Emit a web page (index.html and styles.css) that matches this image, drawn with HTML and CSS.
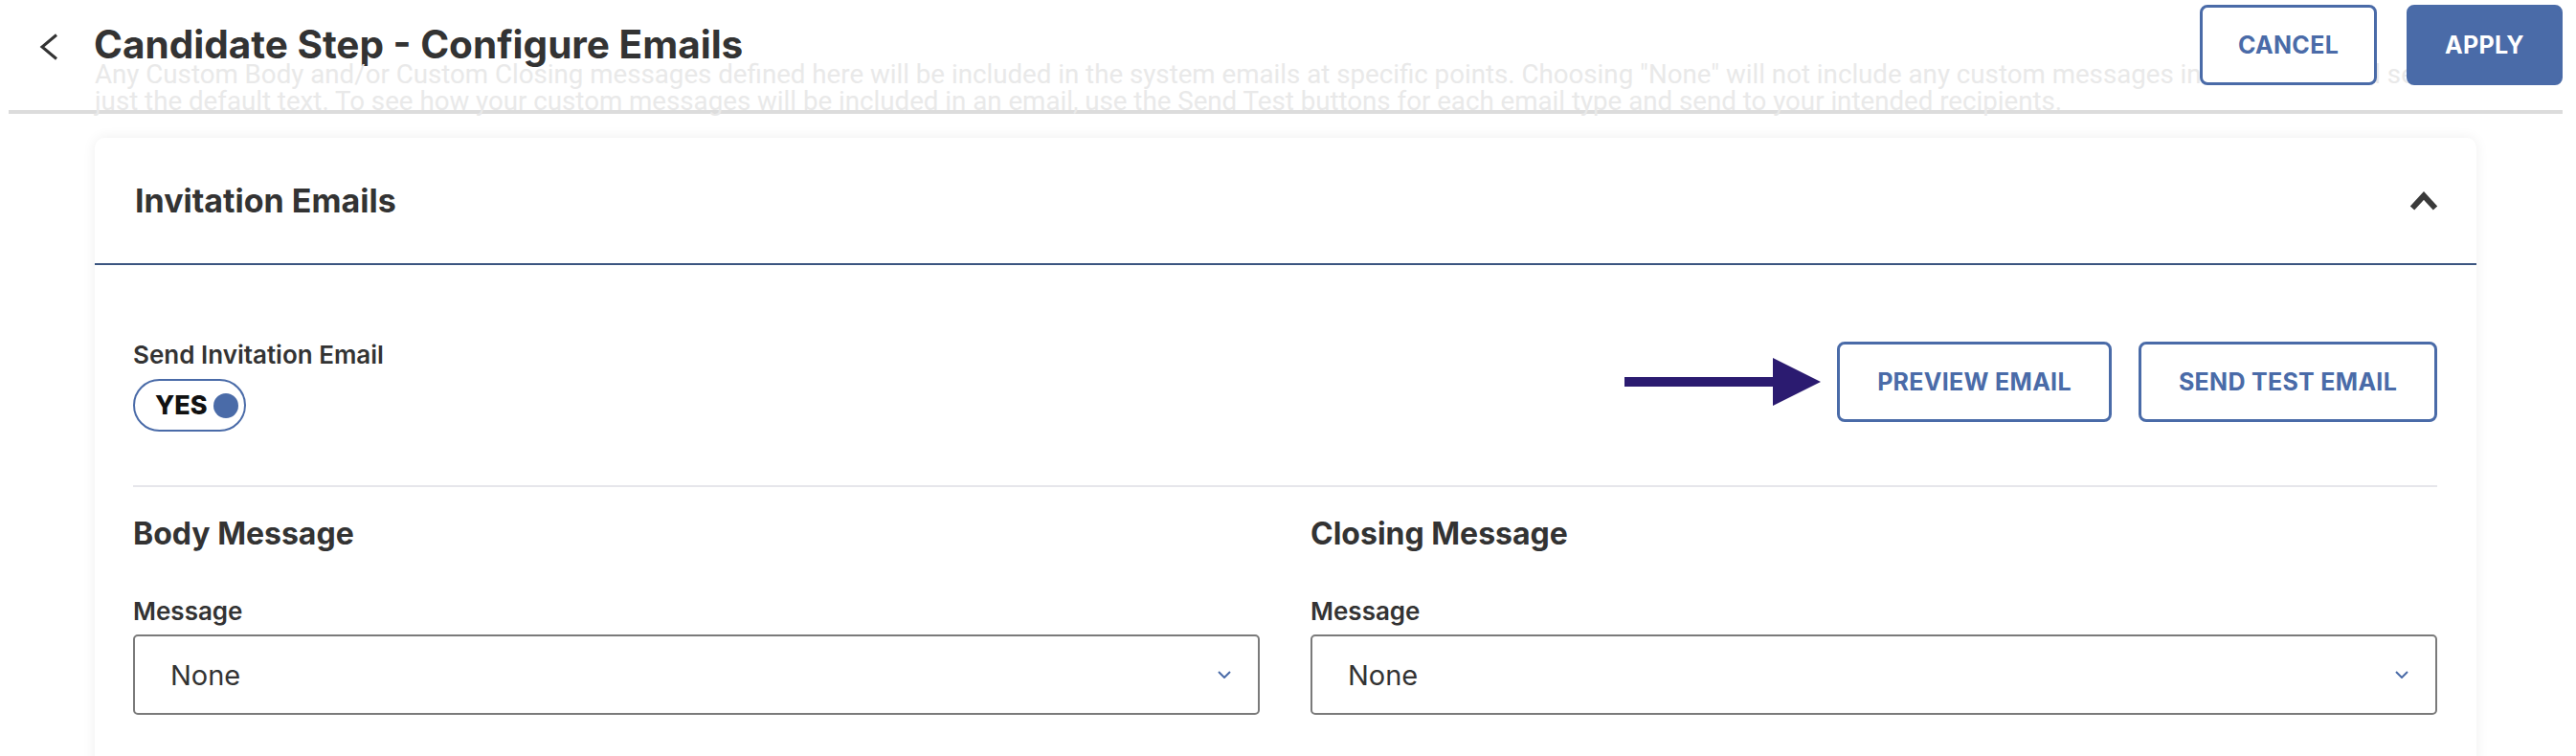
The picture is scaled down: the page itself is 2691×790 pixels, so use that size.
FILE: index.html
```html
<!DOCTYPE html>
<html lang="en">
<head>
    <meta charset="UTF-8">
    <meta name="viewport" content="width=device-width, initial-scale=1.0">
    <title>Candidate Step - Configure Emails</title>
    <link rel="stylesheet" href="styles.css">
</head>
<body>
    <header class="page-header">
        <div class="header-main">
            <svg class="back-icon" width="22" height="28" viewBox="0 0 22 28">
                <polyline points="19,1.5 4,14 19,26.5" fill="none" stroke="#333" stroke-width="3"/>
            </svg>
            <div class="header-text">
                <h1>Candidate Step - Configure Emails</h1>
                <p class="intro">Any Custom Body and/or Custom Closing messages defined here will be included in the system emails at specific points. Choosing "None" will not include any custom messages in the emails and send just the default text. To see how your custom messages will be included in an email, use the Send Test buttons for each email type and send to your intended recipients.</p>
            </div>
        </div>
        <div class="header-actions">
            <button class="btn btn-outline btn-cancel">CANCEL</button>
            <button class="btn btn-primary btn-apply">APPLY</button>
        </div>
    </header>

    <section class="card">
        <div class="card-header">
            <h2>Invitation Emails</h2>
            <svg width="30" height="20" viewBox="0 0 30 20">
                <polyline points="3,17.5 15,4.5 27,17.5" fill="none" stroke="#3a3a3a" stroke-width="6"/>
            </svg>
        </div>
        <div class="card-body">
            <div class="invite-row">
                <div class="invite-setting">
                    <label class="field-label">Send Invitation Email</label>
                    <div class="toggle">
                        <span>YES</span>
                        <span class="knob"></span>
                    </div>
                </div>
                <div class="invite-actions">
                    <svg class="pointer" width="205" height="50" viewBox="0 0 205 50">
                        <rect x="0" y="20" width="156" height="10" fill="#2b1b70"/>
                        <polygon points="155,0 205,25 155,50" fill="#2b1b70"/>
                    </svg>
                    <button class="btn btn-outline btn-preview">PREVIEW EMAIL</button>
                    <button class="btn btn-outline btn-test">SEND TEST EMAIL</button>
                </div>
            </div>
            <div class="divider"></div>
            <div class="message-grid">
                <div class="message-col">
                    <h3>Body Message</h3>
                    <label class="field-label">Message</label>
                    <div class="select">
                        <span>None</span>
                        <svg width="14" height="8" viewBox="0 0 14 8">
                            <polyline points="1,1 7,7 13,1" fill="none" stroke="#4a6ba8" stroke-width="2"/>
                        </svg>
                    </div>
                </div>
                <div class="message-col">
                    <h3>Closing Message</h3>
                    <label class="field-label">Message</label>
                    <div class="select">
                        <span>None</span>
                        <svg width="14" height="8" viewBox="0 0 14 8">
                            <polyline points="1,1 7,7 13,1" fill="none" stroke="#4a6ba8" stroke-width="2"/>
                        </svg>
                    </div>
                </div>
            </div>
        </div>
    </section>
</body>
</html>
```

FILE: styles.css
```css
body {
    font-family: Inter, "Noto Sans", sans-serif;
    color: #333;
    background: #fff;
    margin: 0;
    overflow: hidden;
}
.page-header {
    position: relative;
    height: 115px;
    margin: 0 14px 0 9px;
    border-bottom: 4px solid #dcdcdc;
}
.header-main {
    display: flex;
    padding: 30px 0 0 31px;
}
.back-icon {
    margin-top: 5px;
    margin-right: 36px;
    flex-shrink: 0;
}
.header-text h1 {
    margin: 0;
    font-size: 40.5px;
    line-height: 34px;
    font-weight: 700;
    color: #333;
}
.intro {
    margin: 0 0 0 1px;
    max-width: 2460px;
    font-family: Roboto, sans-serif;
    font-size: 27.7px;
    line-height: 28px;
    color: #e9e9e9;
}
.header-actions {
    position: absolute;
    top: 5px;
    right: 0;
    display: flex;
    gap: 31px;
}
.btn {
    height: 84px;
    font-family: Inter, sans-serif;
    font-size: 25px;
    font-weight: 700;
    letter-spacing: 0.3px;
    border: 3px solid #4a6ba8;
    border-radius: 8px;
    cursor: pointer;
}
.btn-outline {
    background: #fff;
    color: #4a6ba8;
}
.btn-primary {
    background: #4a6ba8;
    color: #fff;
}
.btn-cancel { width: 185px; }
.btn-apply { width: 163px; }
.btn-preview { width: 287px; }
.btn-test { width: 312px; }

.card {
    margin: 25px 104px 0 99px;
    background: #fff;
    border-radius: 10px;
    box-shadow: 0 0 14px rgba(0, 0, 0, 0.07);
}
.card-header {
    height: 131px;
    display: flex;
    align-items: center;
    justify-content: space-between;
    padding: 0 40px 0 42px;
    border-bottom: 2px solid #3b5580;
}
.card-header h2 {
    margin: 0;
    font-size: 34px;
    font-weight: 700;
}
.card-body {
    padding: 80px 41px 80px 40px;
}
.invite-row {
    display: flex;
    justify-content: space-between;
    align-items: flex-start;
}
.field-label {
    display: block;
    font-size: 26px;
    line-height: 30px;
    font-weight: 600;
    color: #333;
}
.invite-setting .field-label {
    margin-top: -1px;
}
.toggle {
    display: flex;
    align-items: center;
    gap: 6px;
    box-sizing: border-box;
    width: 118px;
    height: 55px;
    margin-top: 10px;
    padding-left: 21px;
    border: 2px solid #4a6ba8;
    border-radius: 28px;
    font-size: 27px;
    font-weight: 800;
    color: #111;
}
.knob {
    width: 26px;
    height: 26px;
    border-radius: 50%;
    background: #4a6ba8;
}
.invite-actions {
    display: flex;
    align-items: center;
}
.pointer {
    margin-right: 17px;
}
.btn-preview {
    margin-right: 28px;
}
.divider {
    height: 2px;
    background: #e6e6eb;
    margin-top: 56px;
}
.message-grid {
    display: grid;
    grid-template-columns: 1fr 1fr;
    column-gap: 53px;
}
.message-col h3 {
    margin: 30px 0 47px;
    font-size: 32px;
    line-height: 38px;
    font-weight: 700;
}
.message-col .field-label {
    margin-bottom: 9px;
}
.select {
    display: flex;
    align-items: center;
    justify-content: space-between;
    box-sizing: border-box;
    height: 84px;
    padding: 0 28px 0 37px;
    border: 2px solid #7a7a7a;
    border-radius: 5px;
    font-size: 29px;
    color: #333;
}
```
